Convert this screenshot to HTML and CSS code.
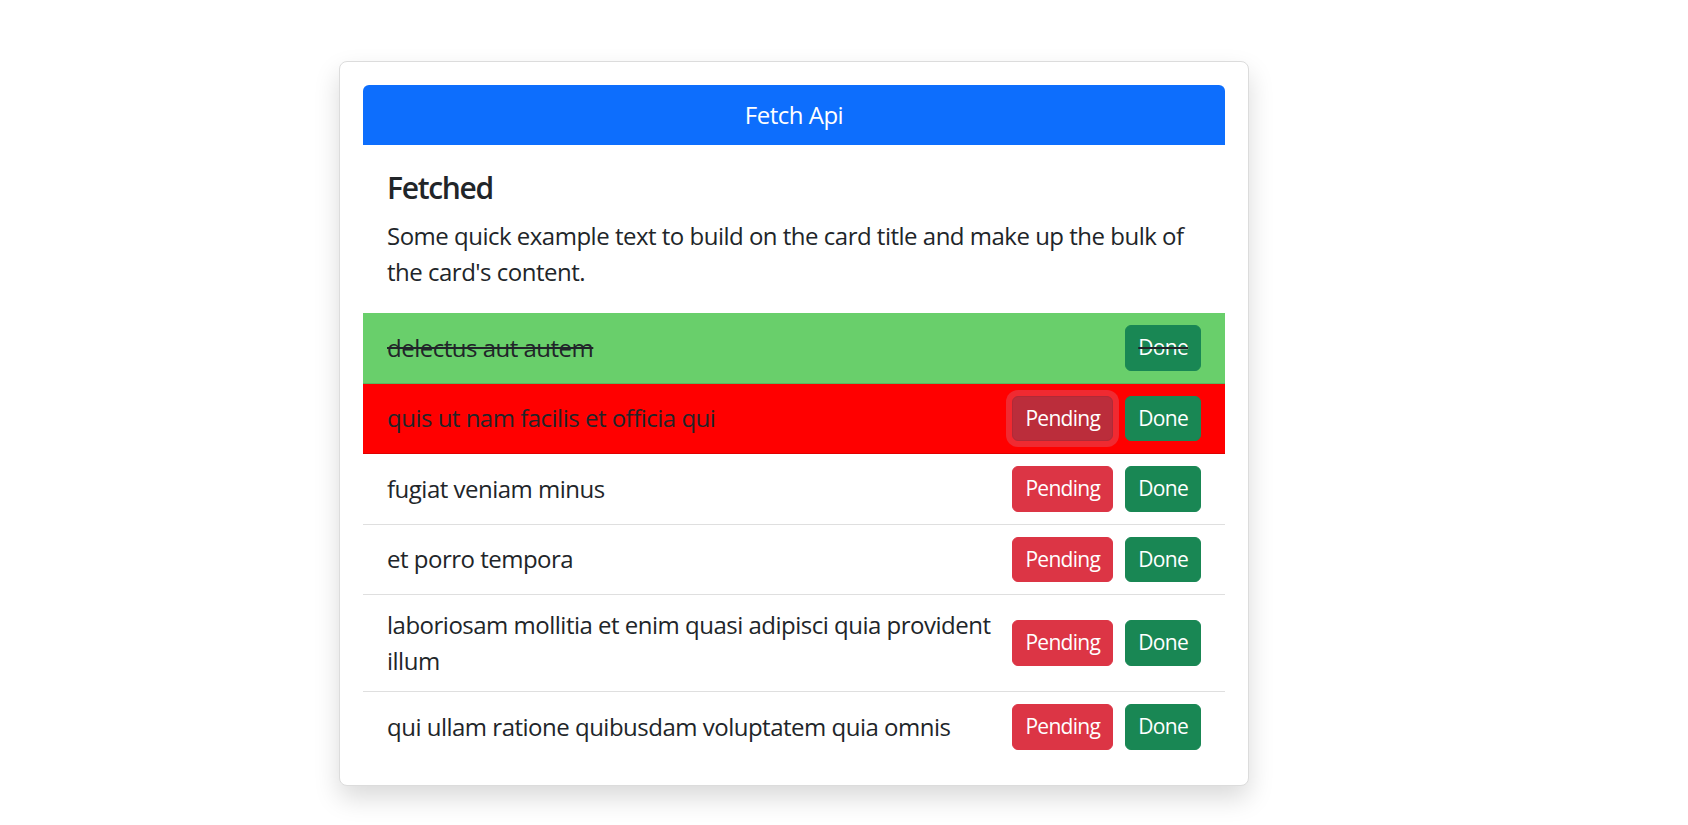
FILE: index.html
```html
<!DOCTYPE html>
<html lang="en">
<head>
<meta charset="utf-8">
<title>Fetch Api</title>
<link rel="stylesheet" href="styles.css">
</head>
<body>
<main class="page">
  <section class="card">
    <div class="card-header">Fetch Api</div>
    <div class="card-body">
      <h5 class="card-title">Fetched</h5>
      <p class="card-text">Some quick example text to build on the card title and make up the bulk of the card's content.</p>
    </div>
    <ul class="list">
      <li class="item item-done">
        <span class="item-text">delectus aut autem</span>
        <div class="actions">
          <button class="btn btn-success">Done</button>
        </div>
      </li>
      <li class="item item-pending">
        <span class="item-text">quis ut nam facilis et officia qui</span>
        <div class="actions">
          <button class="btn btn-danger btn-focus">Pending</button>
          <button class="btn btn-success">Done</button>
        </div>
      </li>
      <li class="item">
        <span class="item-text">fugiat veniam minus</span>
        <div class="actions">
          <button class="btn btn-danger">Pending</button>
          <button class="btn btn-success">Done</button>
        </div>
      </li>
      <li class="item">
        <span class="item-text">et porro tempora</span>
        <div class="actions">
          <button class="btn btn-danger">Pending</button>
          <button class="btn btn-success">Done</button>
        </div>
      </li>
      <li class="item">
        <span class="item-text">laboriosam mollitia et enim quasi adipisci quia provident illum</span>
        <div class="actions">
          <button class="btn btn-danger">Pending</button>
          <button class="btn btn-success">Done</button>
        </div>
      </li>
      <li class="item">
        <span class="item-text">qui ullam ratione quibusdam voluptatem quia omnis</span>
        <div class="actions">
          <button class="btn btn-danger">Pending</button>
          <button class="btn btn-success">Done</button>
        </div>
      </li>
    </ul>
  </section>
</main>
</body>
</html>
```
FILE: styles.css
```css
* { box-sizing: border-box; }

html, body {
  margin: 0;
  background: #fff;
}

body {
  font-family: "Open Sans", "Noto Sans", "Liberation Sans", sans-serif;
  font-size: 24px;
  line-height: 1.5;
  letter-spacing: -0.5px;
  color: #212529;
}

.page {
  padding: 61px 0 40px 339px;
}

.card {
  width: 910px;
  padding: 23px;
  background: #fff;
  border: 1px solid #dcdcdc;
  border-radius: 8px;
  box-shadow: 0 12px 26px rgba(0, 0, 0, 0.15);
}

.card-header {
  height: 60px;
  padding: 12px 24px;
  background: #0d6efd;
  color: #fff;
  text-align: center;
  border-radius: 6px 6px 0 0;
}

.card-body {
  padding: 25px 24px 23px;
}

.card-title {
  margin: 0 0 12px;
  font-size: 30px;
  line-height: 36px;
  font-weight: 600;
  letter-spacing: -1.3px;
}

.card-text {
  margin: 0;
}

.list {
  list-style: none;
  margin: 0;
  padding: 0;
}

.item {
  display: flex;
  align-items: center;
  justify-content: space-between;
  padding: 12px 24px;
  border-bottom: 1px solid rgba(0, 0, 0, 0.125);
}

.item:last-child {
  border-bottom: 0;
}

.item-done {
  background: #69cf6b;
  text-decoration: line-through;
}

.item-pending {
  background: #ff0000;
}

.item-text {
  flex: 1;
  margin-right: 6px;
}

.actions {
  display: flex;
  gap: 12px;
  flex-shrink: 0;
}

.btn {
  font-family: inherit;
  font-size: 21px;
  line-height: 31.5px;
  letter-spacing: -0.7px;
  padding: 6px 12px;
  border: 1px solid transparent;
  border-radius: 6px;
  color: #fff;
  cursor: pointer;
}

.btn-success {
  background: #198754;
  border-color: #198754;
}

.btn-danger {
  background: #dc3545;
  border-color: #dc3545;
}

.btn-focus {
  background: #bb2d3b;
  border-color: #b02a37;
  box-shadow: 0 0 0 6px rgba(225, 83, 97, 0.5);
}
```
